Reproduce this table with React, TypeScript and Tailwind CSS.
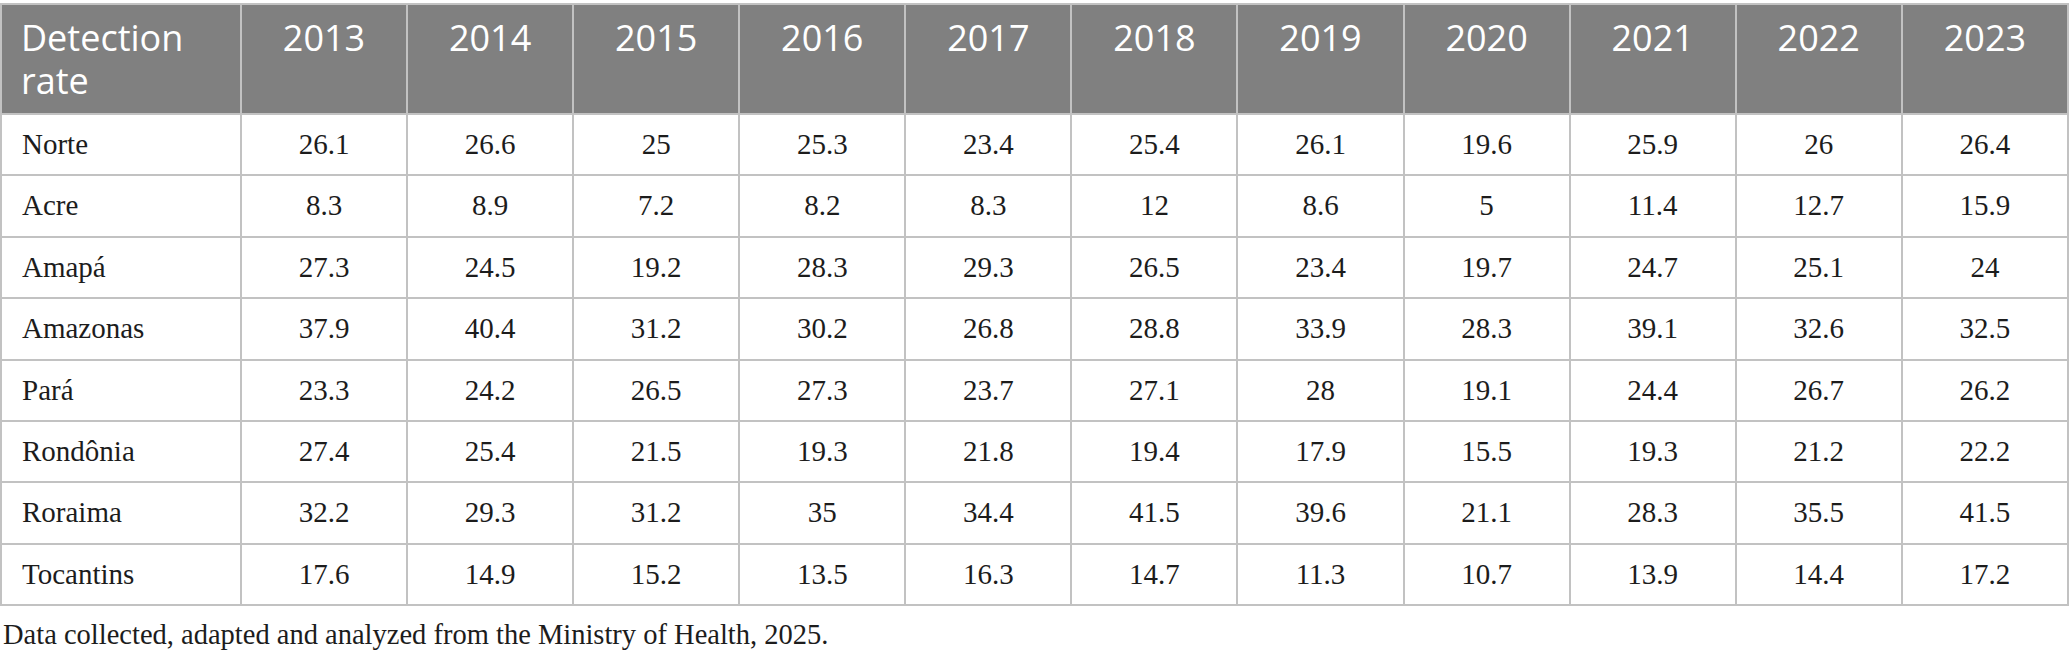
import React from 'react';

const years = ['2013', '2014', '2015', '2016', '2017', '2018', '2019', '2020', '2021', '2022', '2023'];

const rows: { name: string; values: string[] }[] = [
  { name: 'Norte', values: ['26.1', '26.6', '25', '25.3', '23.4', '25.4', '26.1', '19.6', '25.9', '26', '26.4'] },
  { name: 'Acre', values: ['8.3', '8.9', '7.2', '8.2', '8.3', '12', '8.6', '5', '11.4', '12.7', '15.9'] },
  { name: 'Amapá', values: ['27.3', '24.5', '19.2', '28.3', '29.3', '26.5', '23.4', '19.7', '24.7', '25.1', '24'] },
  { name: 'Amazonas', values: ['37.9', '40.4', '31.2', '30.2', '26.8', '28.8', '33.9', '28.3', '39.1', '32.6', '32.5'] },
  { name: 'Pará', values: ['23.3', '24.2', '26.5', '27.3', '23.7', '27.1', '28', '19.1', '24.4', '26.7', '26.2'] },
  { name: 'Rondônia', values: ['27.4', '25.4', '21.5', '19.3', '21.8', '19.4', '17.9', '15.5', '19.3', '21.2', '22.2'] },
  { name: 'Roraima', values: ['32.2', '29.3', '31.2', '35', '34.4', '41.5', '39.6', '21.1', '28.3', '35.5', '41.5'] },
  { name: 'Tocantins', values: ['17.6', '14.9', '15.2', '13.5', '16.3', '14.7', '11.3', '10.7', '13.9', '14.4', '17.2'] },
];

export default function App() {
  return (
    <div className="bg-white w-[2070px] h-[658px] pt-[3px] overflow-hidden">
      <table className="w-[2069px] table-fixed border-collapse font-['Liberation_Serif',serif] text-[#1c1c1c]">
        <colgroup>
          <col className="w-[240px]" />
          {years.map((y) => (
            <col key={y} />
          ))}
        </colgroup>
        <thead>
          <tr className="bg-[#808080] text-white font-['Open_Sans',sans-serif] text-[36px] leading-[43px]">
            <th className="border-2 border-[#c2c2c2] align-top text-left font-normal pl-[19px] pt-[11px] pb-[11px]">
              Detection
              <br />
              rate
            </th>
            {years.map((y) => (
              <th key={y} className="border-2 border-[#c2c2c2] align-top text-center font-normal pt-[11px] pb-[11px]">
                {y}
              </th>
            ))}
          </tr>
        </thead>
        <tbody className="text-[29px]">
          {rows.map((r) => (
            <tr key={r.name} className="h-[61.4px]">
              <td className="border-2 border-[#c2c2c2] align-middle text-left pl-[20px]">{r.name}</td>
              {r.values.map((v, i) => (
                <td key={i} className="border-2 border-[#c2c2c2] align-middle text-center">
                  {v}
                </td>
              ))}
            </tr>
          ))}
        </tbody>
      </table>
      <p className="mt-[12px] pl-[3px] font-['Liberation_Serif',serif] text-[28.5px] leading-[34px] text-[#1c1c1c]">
        Data collected, adapted and analyzed from the Ministry of Health, 2025.
      </p>
    </div>
  );
}
